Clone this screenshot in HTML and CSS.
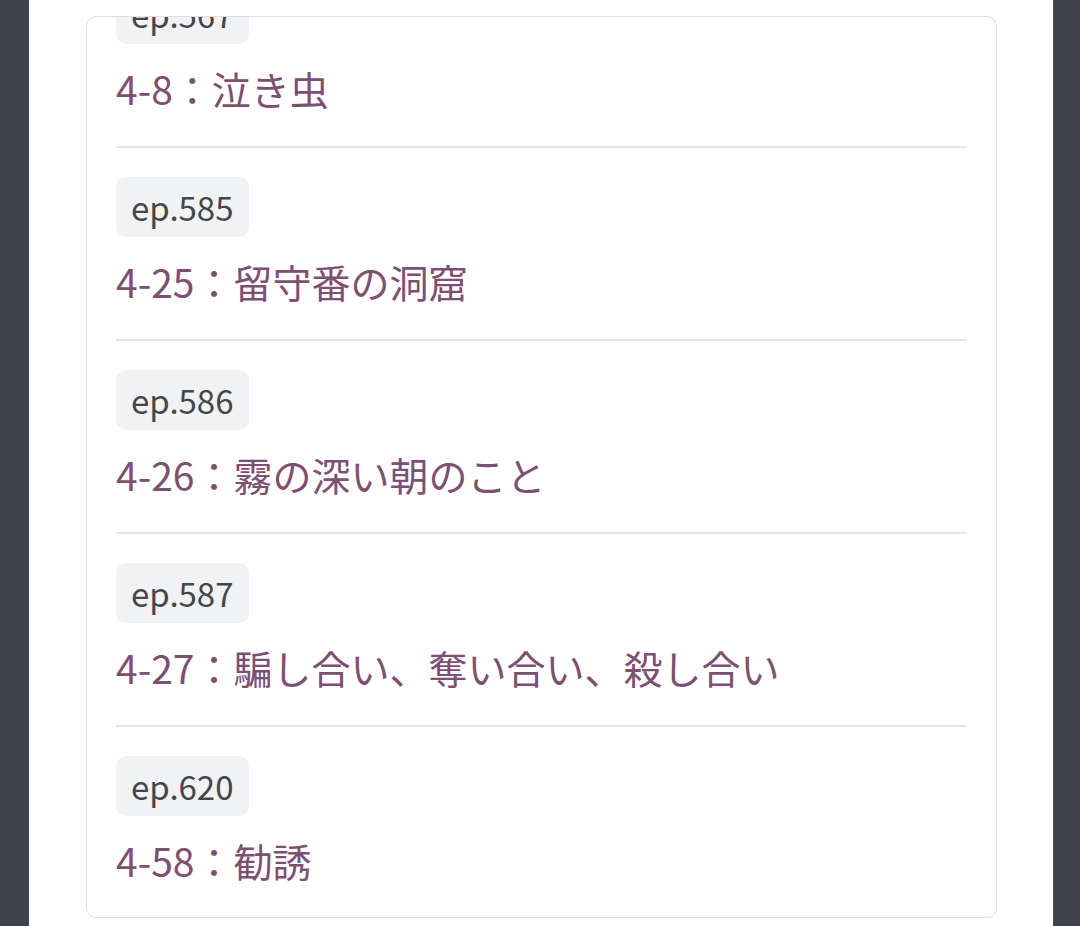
FILE: index.html
```html
<!DOCTYPE html>
<html lang="ja">
<head>
    <meta charset="UTF-8">
    <meta name="viewport" content="width=device-width, initial-scale=1.0">
    <title>エピソード一覧</title>
    <link rel="stylesheet" href="styles.css">
</head>
<body>
    <main class="page">
        <section class="episode-card">
            <ul class="episode-list">
                <li class="episode">
                    <span class="ep-badge">ep.567</span>
                    <a href="#" class="ep-title">4-8：泣き虫</a>
                </li>
                <li class="episode">
                    <span class="ep-badge">ep.585</span>
                    <a href="#" class="ep-title">4-25：留守番の洞窟</a>
                </li>
                <li class="episode">
                    <span class="ep-badge">ep.586</span>
                    <a href="#" class="ep-title">4-26：霧の深い朝のこと</a>
                </li>
                <li class="episode">
                    <span class="ep-badge">ep.587</span>
                    <a href="#" class="ep-title">4-27：騙し合い、奪い合い、殺し合い</a>
                </li>
                <li class="episode">
                    <span class="ep-badge">ep.620</span>
                    <a href="#" class="ep-title">4-58：勧誘</a>
                </li>
            </ul>
        </section>
    </main>
</body>
</html>
```

FILE: styles.css
```css
html, body {
    height: 100%;
}

body {
    margin: 0;
    background-color: #40434b;
    font-family: "Noto Sans CJK JP", "Noto Sans", sans-serif;
    overflow: hidden;
}

.page {
    width: 1024px;
    height: 100%;
    margin-left: 29px;
    background-color: #fff;
    padding: 16px 56px 0 57px;
    box-sizing: border-box;
}

.episode-card {
    height: 902px;
    border: 1px solid #dcdfe3;
    border-radius: 10px;
    box-sizing: border-box;
    overflow: hidden;
}

/* list is scrolled down a little, first entry sits half out of view */
.episode-list {
    list-style: none;
    margin: -62px 0 0;
    padding: 0;
}

.episode {
    margin: 0 29px;
    padding: 29px 0 29px;
    border-bottom: 2px solid #e3e5e8;
    display: flex;
    flex-direction: column;
    align-items: flex-start;
}

.episode:last-child {
    border-bottom: none;
}

.ep-badge {
    display: inline-block;
    height: 60px;
    line-height: 60px;
    padding: 0 15px;
    background-color: #f1f2f4;
    border-radius: 10px;
    color: #45464a;
    font-size: 33px;
}

.ep-title {
    margin-top: 16px;
    color: #7d5073;
    text-decoration: none;
    font-size: 39px;
    line-height: 57px;
}
```
